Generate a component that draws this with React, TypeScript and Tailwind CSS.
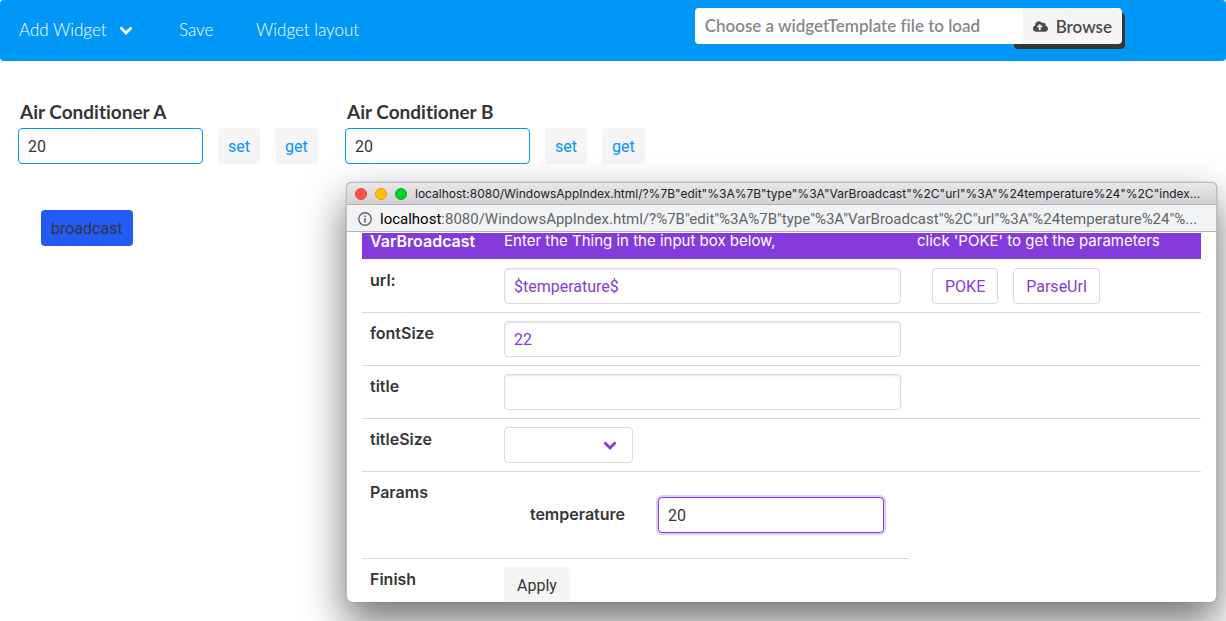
import React from "react";
import { FaCloudUploadAlt } from "react-icons/fa";

const titleUrl =
  'localhost:8080/WindowsAppIndex.html/?%7B"edit"%3A%7B"type"%3A"VarBroadcast"%2C"url"%3A"%24temperature%24"%2C"index...';
const addressPath =
  ':8080/WindowsAppIndex.html/?%7B"edit"%3A%7B"type"%3A"VarBroadcast"%2C"url"%3A"%24temperature%24"%...';

function Chevron({ className }: { className: string }) {
  return (
    <svg viewBox="0 0 14 10" width="14" height="10" className={className} aria-hidden="true">
      <path
        d="M2.3 2.3 L7 7 L11.7 2.3"
        fill="none"
        stroke="currentColor"
        strokeWidth="2.8"
        strokeLinecap="round"
        strokeLinejoin="miter"
      />
    </svg>
  );
}

function Navbar() {
  return (
    <nav className="flex h-[61px] items-start rounded-sm bg-[#0197f6] pr-[104px] pl-[19px] font-['Lato',sans-serif] text-[17px] leading-6 font-light text-white">
      <button type="button" className="mt-[18px] flex w-[160px] items-center gap-3 text-left">
        Add Widget
        <Chevron className="mt-0.5" />
      </button>
      <a href="#save" className="mt-[18px] w-[77px]">
        Save
      </a>
      <a href="#layout" className="mt-[18px]">
        Widget layout
      </a>
      <label className="mt-2 ml-auto flex h-9 leading-[35px] font-semibold [font-variant-ligatures:none]">
        <input type="file" className="sr-only" />
        <span className="relative z-10 w-[328px] rounded-l-sm bg-white pl-2.5 text-[#888888]">
          Choose a widgetTemplate file to load
        </span>
        <span className="-ml-3 flex items-center gap-2 rounded-[4px] bg-[#f5f5f5] pr-2.5 pl-[22px] text-[#4a4a4a] shadow-[3px_5px_0_#363636]">
          <FaCloudUploadAlt size={15} />
          Browse
        </span>
      </label>
    </nav>
  );
}

const softButton = "h-9 rounded-[4px] bg-[#f5f5f5] px-2.5 pt-0.5 text-[#0197f6]";

function Conditioner({ id, name }: { id: string; name: string }) {
  return (
    <section className="flex w-[301px] flex-col">
      <label
        htmlFor={id}
        className="pl-0.5 font-['Lato',sans-serif] text-[19px] leading-8 font-bold text-[#363636] [font-variant-ligatures:none]"
      >
        {name}
      </label>
      <div className="flex gap-[15px]">
        <input
          id={id}
          defaultValue="20"
          className="h-9 w-[185px] rounded-[4px] border border-[#0197f6] bg-white px-[9px] text-[#363636] outline-none"
        />
        <button type="button" className={softButton}>
          set
        </button>
        <button type="button" className={softButton}>
          get
        </button>
      </div>
    </section>
  );
}

const cell = "border-b border-[#dbdbdb] px-2 align-top";
const headCell = "border-b border-white bg-[#853bdb] bg-clip-padding px-2 pt-2.5 pb-1.5";
const field =
  "block h-9 w-full rounded-[4px] border border-[#dbdbdb] bg-white px-[9px] text-[#853bdb] outline-none shadow-[inset_0_1px_2px_rgba(10,10,10,0.1)]";
const outlined = "h-9 rounded-[4px] border border-[#dbdbdb] bg-white px-3 pt-0.5 text-[#853bdb]";

function RowHead({ children, htmlFor }: { children: React.ReactNode; htmlFor?: string }) {
  return (
    <th
      scope="row"
      className={`${cell} py-2 text-left font-['Inter',sans-serif] text-base leading-6 font-semibold`}
    >
      {htmlFor ? <label htmlFor={htmlFor}>{children}</label> : children}
    </th>
  );
}

function EditorTable() {
  return (
    <table className="-mt-3.5 w-full table-fixed border-separate border-spacing-0">
      <colgroup>
        <col className="w-[134px]" />
        <col className="w-[413px]" />
        <col />
      </colgroup>
      <thead>
        <tr className="text-left font-['Inter',sans-serif] text-[15px] leading-6 text-white">
          <th className={`${headCell} text-base leading-6 font-semibold`}>VarBroadcast</th>
          <th className={`${headCell} font-normal`}>Enter the Thing in the input box below,</th>
          <th className={`${headCell} font-normal`}>click 'POKE' to get the parameters</th>
        </tr>
      </thead>
      <tbody>
        <tr>
          <RowHead htmlFor="url">url:</RowHead>
          <td className={`${cell} py-2`}>
            <input id="url" className={field} defaultValue="$temperature$" />
          </td>
          <td className={`${cell} py-2`}>
            <div className="flex gap-[15px] pl-[15px]">
              <button type="button" className={outlined}>
                POKE
              </button>
              <button type="button" className={outlined}>
                ParseUrl
              </button>
            </div>
          </td>
        </tr>
        <tr>
          <RowHead htmlFor="fontSize">fontSize</RowHead>
          <td className={`${cell} py-2`}>
            <input id="fontSize" className={field} defaultValue="22" />
          </td>
          <td className={cell} />
        </tr>
        <tr>
          <RowHead htmlFor="title">title</RowHead>
          <td className={`${cell} py-2`}>
            <input id="title" className={field} />
          </td>
          <td className={cell} />
        </tr>
        <tr>
          <RowHead htmlFor="titleSize">titleSize</RowHead>
          <td className={`${cell} py-2`}>
            <div className="relative w-[129px]">
              <select
                id="titleSize"
                className="block h-9 w-full appearance-none rounded-[4px] border border-[#dbdbdb] bg-white px-[9px] text-[#853bdb]"
                defaultValue=""
              >
                <option value=""></option>
              </select>
              <Chevron className="pointer-events-none absolute top-3.5 right-4 text-[#853bdb]" />
            </div>
          </td>
          <td className={cell} />
        </tr>
        <tr>
          <RowHead>Params</RowHead>
          <td className={`${cell} pt-[25px] pb-[25px]`}>
            <div className="flex justify-end gap-[33px] pr-[17px]">
              <label
                htmlFor="temperature"
                className="font-['Inter',sans-serif] leading-[34px] font-semibold"
              >
                temperature
              </label>
              <input
                id="temperature"
                defaultValue="20"
                className="h-9 w-[226px] rounded-[4px] border border-[#853bdb] bg-white px-[9px] shadow-[0_0_0_2px_rgba(133,59,219,0.25)] outline-none"
              />
            </div>
          </td>
        </tr>
        <tr>
          <RowHead>Finish</RowHead>
          <td className={`${cell} py-2`}>
            <button type="button" className="h-9 rounded-[4px] bg-[#f5f5f5] px-[13px] pt-0.5">
              Apply
            </button>
          </td>
        </tr>
      </tbody>
    </table>
  );
}

function EditorWindow() {
  return (
    <div className="absolute top-[182px] left-[346px] flex h-[420px] w-[871px] flex-col overflow-hidden rounded-[6px] border border-b-0 border-[#bdbdbd] bg-white shadow-[0_20px_40px_2px_rgba(0,0,0,0.52),0_0_1px_rgba(0,0,0,0.6)]">
      <header className="flex h-[22px] shrink-0 items-center gap-2 border-b border-[#b1afb1] bg-linear-to-b from-[#e9e7e9] to-[#d2d0d2] pl-2 font-['Inter',sans-serif] text-xs whitespace-nowrap text-[#222222]">
        <span className="size-3 shrink-0 rounded-full border border-[#e2443c] bg-[#ff4f47]" />
        <span className="size-3 shrink-0 rounded-full border border-[#e0a100] bg-[#ffbe04]" />
        <span className="size-3 shrink-0 rounded-full border border-[#00b01f] bg-[#04d02c]" />
        <span>{titleUrl}</span>
      </header>
      <div className="flex h-[27px] shrink-0 items-center gap-2 border-b border-[#b5b5b5] bg-[#f1f3f4] pt-0.5 pl-[11px] text-[15px] whitespace-nowrap text-[#616568]">
        <svg viewBox="0 0 14 14" width="14" height="14" className="shrink-0" aria-hidden="true">
          <circle cx="7" cy="7" r="6.2" fill="none" stroke="#5f6368" strokeWidth="1.4" />
          <path d="M7 6.2V10.4M7 3.5V5" stroke="#5f6368" strokeWidth="1.6" />
        </svg>
        <span>
          <span className="text-black">localhost</span>
          {addressPath}
        </span>
      </div>
      <div className="mt-px min-h-0 flex-1 overflow-hidden px-[15px]">
        <EditorTable />
      </div>
    </div>
  );
}

export default function App() {
  return (
    <div className="relative min-h-screen overflow-hidden bg-white font-['Roboto',sans-serif] text-base text-[#363636]">
      <Navbar />
      <main className="px-[18px] pt-[35px]">
        <div className="flex gap-[26px]">
          <Conditioner id="ac-a" name="Air Conditioner A" />
          <Conditioner id="ac-b" name="Air Conditioner B" />
        </div>
        <button
          type="button"
          className="mt-[46px] ml-[23px] h-9 rounded-[4px] bg-[#235cf5] px-2.5 pt-0.5 text-[#363636]"
        >
          broadcast
        </button>
      </main>
      <EditorWindow />
    </div>
  );
}
